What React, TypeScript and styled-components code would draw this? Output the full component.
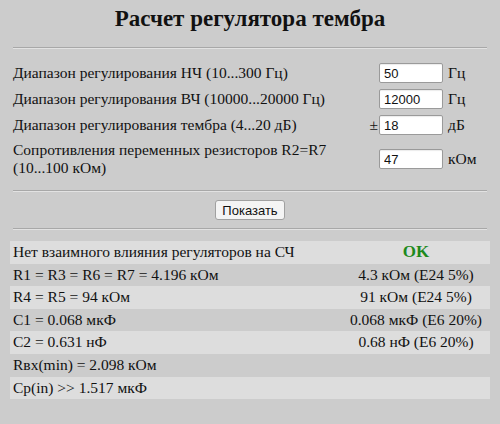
import { FC, Fragment } from "react";
import styled, { createGlobalStyle } from "styled-components";

const serif = `"Liberation Serif", "Times New Roman", "DejaVu Serif", serif`;
const sans = `"Liberation Sans", Arial, sans-serif`;

const GlobalStyle = createGlobalStyle`
  html, body {
    margin: 0;
    padding: 0;
    background: #cccccc;
  }
  body {
    font-family: ${serif};
    font-size: 15.5px;
    color: #111;
  }
`;

const Page = styled.div`
  width: 500px;
  height: 424px;
  padding: 6px 10px 0;
  box-sizing: border-box;
  font-family: ${serif};
  font-size: 15.5px;
`;

const Title = styled.h2`
  margin: 0;
  text-align: center;
  font-family: ${serif};
  font-size: 23px;
  font-weight: bold;
  line-height: 26px;
  color: #111;
`;

const Rule = styled.hr<{ $top: number; $bottom: number }>`
  margin: ${(p) => p.$top}px 3px ${(p) => p.$bottom}px;
  border: 0;
  border-top: 1px solid #a8a8a8;
  border-bottom: 1px solid #e2e2e2;
  height: 0;
`;

const Form = styled.div`
  display: grid;
  grid-template-columns: 1fr 15px 64px 44px;
  row-gap: 6px;
  padding: 0 3px;
  align-items: center;
`;

const Label = styled.div`
  font-family: ${serif};
  line-height: 18px;
`;

const Sign = styled.div`
  font-family: ${serif};
  text-align: right;
  padding-right: 1px;
`;

const Field = styled.input`
  width: 64px;
  height: 20px;
  box-sizing: border-box;
  border: 1px solid #9a9a9a;
  border-radius: 2px;
  padding: 1px 4px;
  font-family: ${sans};
  font-size: 13px;
  color: #111;
  background: #fff;
  box-shadow: inset 0 1px 1px rgba(0, 0, 0, 0.08);
`;

const Unit = styled.div`
  font-family: ${serif};
  padding-left: 5px;
`;

const ButtonRow = styled.div`
  display: flex;
  justify-content: center;
`;

const Button = styled.button`
  height: 20px;
  padding: 0 6px;
  font-family: ${sans};
  font-size: 13px;
  color: #111;
  background: #f4f4f4;
  border: 1px solid #a0a0a0;
  border-radius: 3px;
`;

const Results = styled.div`
  display: grid;
  grid-template-columns: 1fr 148px;
`;

const Cell = styled.div<{ $light: boolean; $right?: boolean }>`
  height: 22.6px;
  line-height: 22.6px;
  font-family: ${serif};
  background: ${(p) => (p.$light ? "#dddddd" : "transparent")};
  padding-left: ${(p) => (p.$right ? 0 : 3)}px;
  text-align: ${(p) => (p.$right ? "center" : "left")};
  white-space: nowrap;
`;

const Ok = styled.span`
  color: #1d8a1d;
  font-weight: bold;
  font-size: 17px;
`;

interface InputRow {
  label: string;
  value: string;
  unit: string;
  sign?: string;
}

const inputs: InputRow[] = [
  { label: "Диапазон регулирования НЧ (10...300 Гц)", value: "50", unit: "Гц" },
  { label: "Диапазон регулирования ВЧ (10000...20000 Гц)", value: "12000", unit: "Гц" },
  { label: "Диапазон регулирования тембра (4...20 дБ)", value: "18", unit: "дБ", sign: "±" },
  {
    label: "Сопротивления переменных резисторов R2=R7 (10...100 кОм)",
    value: "47",
    unit: "кОм",
  },
];

const results: [string, string][] = [
  ["R1 = R3 = R6 = R7 = 4.196 кОм", "4.3 кОм (E24 5%)"],
  ["R4 = R5 = 94 кОм", "91 кОм (E24 5%)"],
  ["C1 = 0.068 мкФ", "0.068 мкФ (E6 20%)"],
  ["C2 = 0.631 нФ", "0.68 нФ (E6 20%)"],
  ["Rвх(min) = 2.098 кОм", ""],
  ["Cp(in) >> 1.517 мкФ", ""],
];

const App: FC = () => {
  return (
    <Page>
      <GlobalStyle />
      <Title>Расчет регулятора тембра</Title>
      <Rule $top={15} $bottom={14} />
      <Form>
        {inputs.map((row) => (
          <Fragment key={row.label}>
            <Label>{row.label}</Label>
            <Sign>{row.sign ?? ""}</Sign>
            <Field defaultValue={row.value} />
            <Unit>{row.unit}</Unit>
          </Fragment>
        ))}
      </Form>
      <Rule $top={13} $bottom={8} />
      <ButtonRow>
        <Button>Показать</Button>
      </ButtonRow>
      <Rule $top={8} $bottom={11} />
      <Results>
        <Cell $light>Нет взаимного влияния регуляторов на СЧ</Cell>
        <Cell $light $right>
          <Ok>OK</Ok>
        </Cell>
        {results.map(([left, right], i) => (
          <Fragment key={left}>
            <Cell $light={i % 2 === 1}>{left}</Cell>
            <Cell $light={i % 2 === 1} $right>
              {right}
            </Cell>
          </Fragment>
        ))}
      </Results>
    </Page>
  );
};

export default App;
